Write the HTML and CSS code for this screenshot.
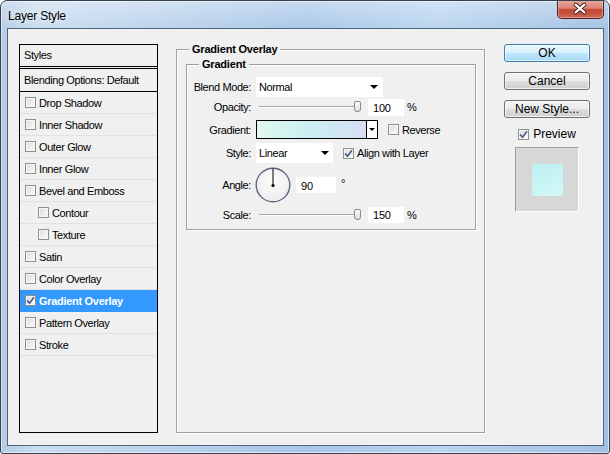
FILE: index.html
```html
<!DOCTYPE html>
<html>
<head>
<meta charset="utf-8">
<title>Layer Style</title>
<link rel="stylesheet" href="styles.css">
</head>
<body>
<div class="window">
  <div class="titlebar">
    <span class="title">Layer Style</span>
    <div class="close">
      <svg width="47" height="19" viewBox="0 0 47 19">
        <path d="M19 5.5 L28 13.5 M28 5.5 L19 13.5" stroke="#3a1010" stroke-width="4" stroke-linecap="round"/>
        <path d="M19 5.5 L28 13.5 M28 5.5 L19 13.5" stroke="#ffffff" stroke-width="2.2" stroke-linecap="round"/>
      </svg>
    </div>
  </div>
  <div class="client">
    <div class="list">
      <div class="list-head">Styles</div>
      <div class="list-blend">Blending Options: Default</div>
      <div class="item"><span class="cb"></span>Drop Shadow</div>
      <div class="item"><span class="cb"></span>Inner Shadow</div>
      <div class="item"><span class="cb"></span>Outer Glow</div>
      <div class="item"><span class="cb"></span>Inner Glow</div>
      <div class="item"><span class="cb"></span>Bevel and Emboss</div>
      <div class="item sub"><span class="cb"></span>Contour</div>
      <div class="item sub"><span class="cb"></span>Texture</div>
      <div class="item"><span class="cb"></span>Satin</div>
      <div class="item"><span class="cb"></span>Color Overlay</div>
      <div class="item selected"><span class="cb"><svg width="9" height="9" viewBox="0 0 9 9"><path d="M1 4.5 L3.5 7.2 L8 1.2" fill="none" stroke="#4a5b8c" stroke-width="1.7"/></svg></span>Gradient Overlay</div>
      <div class="item"><span class="cb"></span>Pattern Overlay</div>
      <div class="item"><span class="cb"></span>Stroke</div>
    </div>

    <fieldset class="group">
      <legend>Gradient Overlay</legend>
      <fieldset class="subgroup">
        <legend>Gradient</legend>
        <div class="rows">
          <div class="row r1">
            <span class="lbl">Blend Mode:</span>
            <div class="select w-blend"><span>Normal</span><i class="arrow"></i></div>
          </div>
          <div class="row r2">
            <span class="lbl">Opacity:</span>
            <div class="slider"><span class="track"></span><span class="thumb"></span></div>
            <input class="field w-num" type="text" value="100">
            <span class="unit">%</span>
          </div>
          <div class="row r3">
            <span class="lbl">Gradient:</span>
            <div class="grad"><span class="grad-fill"></span><span class="grad-btn"><i class="arrow small"></i></span></div>
            <label class="check reverse"><span class="cb"></span>Reverse</label>
          </div>
          <div class="row r4">
            <span class="lbl">Style:</span>
            <div class="select w-style"><span>Linear</span><i class="arrow"></i></div>
            <label class="check align"><span class="cb"><svg width="9" height="9" viewBox="0 0 9 9"><path d="M1 4.5 L3.5 7.2 L8 1.2" fill="none" stroke="#4a5b8c" stroke-width="1.7"/></svg></span>Align with Layer</label>
          </div>
          <div class="row r5">
            <span class="lbl">Angle:</span>
            <svg class="dial" width="36" height="36" viewBox="0 0 36 36">
              <defs>
                <radialGradient id="dg" cx="50%" cy="40%" r="60%">
                  <stop offset="0" stop-color="#fdfdfd"/>
                  <stop offset="1" stop-color="#ececec"/>
                </radialGradient>
              </defs>
              <circle cx="18" cy="18" r="16.8" fill="url(#dg)" stroke="#5f6481" stroke-width="1.4"/>
              <line x1="18" y1="18.5" x2="18" y2="1.5" stroke="#000" stroke-width="1"/>
              <circle cx="18" cy="18.5" r="1.6" fill="#000"/>
            </svg>
            <input class="field w-angle" type="text" value="90">
            <span class="deg">°</span>
          </div>
          <div class="row r6">
            <span class="lbl">Scale:</span>
            <div class="slider"><span class="track"></span><span class="thumb"></span></div>
            <input class="field w-num" type="text" value="150">
            <span class="unit">%</span>
          </div>
        </div>
      </fieldset>
    </fieldset>

    <div class="side">
      <button class="btn default">OK</button>
      <button class="btn">Cancel</button>
      <button class="btn">New Style...</button>
      <label class="check preview-check"><span class="cb"><svg width="9" height="9" viewBox="0 0 9 9"><path d="M1 4.5 L3.5 7.2 L8 1.2" fill="none" stroke="#4a5b8c" stroke-width="1.7"/></svg></span>Preview</label>
      <div class="preview"><span class="swatch"></span></div>
    </div>
  </div>
</div>
</body>
</html>
```

FILE: styles.css
```css
html, body {
  margin: 0;
  padding: 0;
  background: #ffffff;
}

body {
  font-family: "Liberation Sans", Arial, sans-serif;
  font-size: 11px;
  color: #000;
}

.window {
  width: 610px;
  height: 454px;
  box-sizing: border-box;
  border: 1px solid #34414f;
  border-radius: 7px 7px 3px 3px;
  padding: 0 5px 7px 6px;
  display: flex;
  flex-direction: column;
  background:
    linear-gradient(180deg, rgba(255,255,255,0.35) 0px, rgba(255,255,255,0.05) 26px, rgba(255,255,255,0) 40px),
    linear-gradient(90deg, #b2cbe6 0%, #c9dcf0 6%, #bcd3ec 25%, #a8c7e8 50%, #b9d4ef 72%, #a2c1e2 100%);
  box-shadow: inset 0 0 0 1px rgba(255,255,255,0.55);
  overflow: hidden;
}

/* ---------- title bar ---------- */
.titlebar {
  height: 27px;
  display: flex;
  align-items: flex-start;
  padding-left: 1px;
}

.title {
  font-size: 12px;
  letter-spacing: -0.2px;
  line-height: 14px;
  margin-top: 8px;
  color: #000;
  text-shadow: 0 0 6px rgba(255,255,255,0.9);
}

.close {
  margin-left: auto;
  margin-top: -1px;
  width: 47px;
  height: 19px;
  box-sizing: border-box;
  border: 1px solid #4b2020;
  border-top: none;
  border-radius: 0 0 5px 5px;
  background: linear-gradient(180deg, #e9aaa0 0%, #d98073 45%, #c2432f 55%, #cf6a4e 100%);
  box-shadow: inset 0 0 0 1px rgba(255,255,255,0.35);
  display: flex;
}

.close svg {
  display: block;
  margin: -1px 0 0 -1px;
}

/* ---------- client area ---------- */
.client {
  flex: 1;
  border: 1px solid #53657a;
  background: #f0f0f0;
  display: flex;
  align-items: stretch;
  padding: 15px 13px 12px 11px;
}

/* ---------- styles list ---------- */
.list {
  width: 139px;
  box-sizing: border-box;
  border: 1px solid #000;
  background: #f0f0f0;
  letter-spacing: -0.4px;
  flex: none;
}

.list-head {
  height: 21px;
  line-height: 21px;
  padding-left: 4px;
  border-bottom: 3px double #000;
}

.list-blend {
  height: 22px;
  line-height: 22px;
  padding-left: 4px;
  border-bottom: 1px solid #000;
}

.item {
  height: 21px;
  border-bottom: 1px solid #e1e1e1;
  display: flex;
  align-items: center;
  padding-left: 5px;
}

.item .cb {
  margin-right: 3px;
}

.item.sub {
  padding-left: 18px;
}

.item.selected {
  background: #3399ff;
  color: #fff;
  font-weight: bold;
  letter-spacing: -0.3px;
  border-bottom-color: #3399ff;
}

/* ---------- checkbox ---------- */
.cb {
  width: 11px;
  height: 11px;
  box-sizing: border-box;
  border: 1px solid #8e8f8f;
  background: linear-gradient(135deg, #d9d9d9 0%, #ededed 55%, #fbfbfb 100%);
  box-shadow: inset 0 0 0 1px #f7f7f7;
  display: inline-flex;
  align-items: center;
  justify-content: center;
  flex: none;
}

.cb svg {
  display: block;
}

.check {
  display: flex;
  align-items: center;
  letter-spacing: -0.4px;
}

.check .cb {
  margin-right: 3px;
}

/* ---------- group boxes ---------- */
.group {
  margin: -1px 0 0 18px;
  width: 309px;
  box-sizing: border-box;
  padding: 0 8px 0 9px;
  border: 1px solid #a0a0a0;
  box-shadow: 1px 1px 0 #fff, inset 1px 1px 0 #fff;
  min-inline-size: 0;
  flex: none;
}

legend {
  font-weight: bold;
  font-size: 11px;
  line-height: 12px;
  letter-spacing: -0.2px;
  padding: 0 3px;
  background: #f0f0f0;
}

.group > legend {
  margin-left: 3px;
}

.subgroup {
  margin: 3px 0 0 0;
  padding: 0;
  border: 1px solid #a0a0a0;
  box-shadow: 1px 1px 0 #fff, inset 1px 1px 0 #fff;
  min-inline-size: 0;
}

.subgroup > legend {
  margin-left: 12px;
}

.rows {
  display: flex;
  flex-direction: column;
  padding: 7px 0 6px 0;
}

.row {
  display: flex;
  align-items: center;
  letter-spacing: -0.4px;
}

.lbl {
  width: 64px;
  text-align: right;
  margin-right: 5px;
  flex: none;
}

.r1 { height: 20px; }
.r2 { height: 20px; }
.r3 { height: 19px; margin-top: 3px; }
.r4 { height: 20px; margin-top: 4px; }
.r5 { height: 36px; margin-top: 4px; }
.r6 { height: 17px; margin-top: 3px; }

/* select */
.select {
  height: 20px;
  box-sizing: border-box;
  background: #fff;
  display: flex;
  align-items: center;
  justify-content: space-between;
  padding: 0 5px 0 3px;
}

.w-blend { width: 127px; }
.w-style { width: 77px; padding-right: 4px; }

.arrow {
  width: 0;
  height: 0;
  border-left: 4px solid transparent;
  border-right: 4px solid transparent;
  border-top: 4px solid #000;
}

.arrow.small {
  border-left-width: 3px;
  border-right-width: 3px;
  border-top-width: 3px;
}

/* slider */
.slider {
  position: relative;
  width: 108px;
  height: 14px;
  display: flex;
  align-items: center;
  flex: none;
}

.track {
  margin-left: 3px;
  width: 98px;
  height: 0;
  border-top: 1px solid #a8a8a8;
  border-bottom: 1px solid #fdfdfd;
}

.thumb {
  position: absolute;
  left: 98px;
  top: 1px;
  width: 7px;
  height: 11px;
  box-sizing: border-box;
  border: 1px solid #8a8a8a;
  border-radius: 2px 2px 3px 3px;
  background: linear-gradient(180deg, #fdfdfd, #dedede);
}

/* text fields */
.field {
  height: 17px;
  box-sizing: border-box;
  border: none;
  background: #fff;
  font: inherit;
  letter-spacing: -0.2px;
  padding: 1px 0 0 5px;
  margin: 0;
  outline: none;
  color: #000;
}

.w-num {
  width: 36px;
  margin-left: 4px;
}

.r6 .field { height: 16px; }

.unit {
  margin-left: 3px;
}

/* gradient swatch */
.grad {
  width: 122px;
  height: 19px;
  box-sizing: border-box;
  border: 1px solid #000;
  display: flex;
  flex: none;
}

.grad-fill {
  flex: 1;
  background: linear-gradient(90deg, #e4f8ee 0%, #d3f4f0 25%, #c9f0f3 45%, #d0e8f4 70%, #d8dcf4 100%);
}

.grad-btn {
  width: 10px;
  border-left: 1px solid #000;
  background: #fff;
  display: flex;
  align-items: center;
  justify-content: center;
}

.reverse {
  margin-left: 10px;
}

.align {
  margin-left: 10px;
}

/* angle */
.dial {
  display: block;
  margin-left: -1px;
  flex: none;
}

.w-angle {
  width: 40px;
  height: 16px;
  margin-left: 5px;
}

.deg {
  margin-left: 5px;
  margin-top: -5px;
}

/* ---------- right column ---------- */
.side {
  width: 86px;
  margin-left: 19px;
  display: flex;
  flex-direction: column;
  align-items: center;
  flex: none;
}

.btn {
  width: 86px;
  height: 18px;
  box-sizing: border-box;
  margin: 0 0 10px 0;
  padding: 0;
  border: 1px solid #707070;
  border-radius: 3px;
  background: linear-gradient(180deg, #f2f2f2 0%, #ebebeb 48%, #dddddd 52%, #cfcfcf 100%);
  box-shadow: inset 0 0 0 1px rgba(255,255,255,0.7);
  font-family: "Liberation Sans", Arial, sans-serif;
  font-size: 12px;
  line-height: 16px;
  color: #000;
  text-align: center;
}

.btn.default {
  border-color: #3c7fb1;
  background: linear-gradient(180deg, #eaf6fd 0%, #d9f0fc 48%, #bee6fd 52%, #a7d9f5 100%);
  box-shadow: inset 0 0 0 1px rgba(255,255,255,0.6);
}

.preview-check {
  font-size: 12px;
  letter-spacing: 0;
  height: 12px;
  margin-top: 0;
}

.preview-check .cb {
  margin-right: 4px;
}

.preview {
  margin-top: 7px;
  width: 64px;
  height: 65px;
  box-sizing: border-box;
  border: 1px solid;
  border-color: #a0a0a0 #ffffff #ffffff #a0a0a0;
  background: #d7d7d7;
  display: flex;
  align-items: center;
  justify-content: center;
}

.swatch {
  width: 31px;
  height: 32px;
  border-radius: 2px;
  background: linear-gradient(160deg, #bff0f4 0%, #c7f4f4 50%, #d2f8f6 100%);
}
```
